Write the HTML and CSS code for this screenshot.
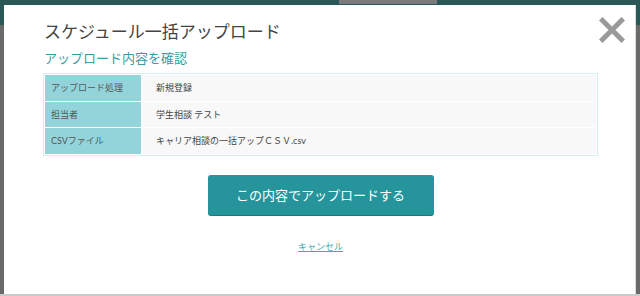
FILE: index.html
```html
<!DOCTYPE html>
<html lang="ja">
<head>
  <meta charset="UTF-8">
  <meta name="viewport" content="width=device-width">
  <title>スケジュール一括アップロード</title>
  <link rel="stylesheet" href="styles.css">
</head>
<body>

<div class=topbar><span class=tab></span></div>

<div class=modal>
  <button class=close title="閉じる">
    <svg width=26 height=26 viewBox="0 0 26 26">
      <path d="M3.5 3.5 L22.5 22.5 M22.5 3.5 L3.5 22.5" stroke="#9a9a9a" stroke-width="5" stroke-linecap="square" fill="none"/>
    </svg>
  </button>

  <h2 class=title>スケジュール一括アップロード</h2>
  <h3 class=subtitle>アップロード内容を確認</h3>

  <table class=confirm>
    <tr><th>アップロード処理</th><td>新規登録</td></tr>
    <tr><th>担当者</th><td>学生相談 テスト</td></tr>
    <tr><th>CSVファイル</th><td>キャリア相談の一括アップＣＳＶ.csv</td></tr>
  </table>

  <div class=actions>
    <button class=submit>この内容でアップロードする</button>
    <a class=cancel href="#">キャンセル</a>
  </div>
</div>

<div class=bottombar></div>

</body>
</html>
```

FILE: styles.css
```css
body {
  margin: 0;
  height: 296px;
  overflow: hidden;
  background: linear-gradient(#2a5859 25px, #6a6a6a 25px);
  font-family: Lato, "Noto Sans CJK JP", sans-serif;
}
.topbar {
  height: 5px;
  display: flex;
}
.tab {
  margin-left: 339px;
  width: 98px;
  height: 4px;
  background: #7b7b7b;
}
.modal {
  position: relative;
  height: 289px;
  margin: 0 4px;
  padding: 15px 37px 0 39px;
  box-sizing: border-box;
  background: #fff;
  border-right: 1px solid #ddd;
}
.bottombar {
  height: 2px;
  background: #cbcbcb;
}
.close {
  position: absolute;
  top: 12px;
  right: 10px;
  padding: 0;
  border: 0;
  background: none;
  cursor: pointer;
  line-height: 0;
}
.title {
  margin: 0 0 5px 1px;
  font-size: 17px;
  line-height: 24px;
  font-weight: normal;
  color: #444;
}
.subtitle {
  margin: 0 0 6px 1px;
  font-size: 13px;
  line-height: 18px;
  font-weight: normal;
  color: #3a9ca3;
}
.confirm {
  width: 100%;
  border: 1px solid #d5eef2;
  border-spacing: 1px;
  font-size: 9px;
}
.confirm th, .confirm td {
  height: 25.5px;
  padding: 0 0 0 6px;
  text-align: left;
  font-weight: normal;
}
.confirm th {
  width: 90px;
  background: #93d4db;
  color: #555;
}
.confirm td {
  padding-left: 14px;
  background: #f8f8f8;
  color: #444;
}
.actions {
  display: flex;
  flex-direction: column;
  align-items: center;
}
.submit {
  margin-top: 19px;
  width: 226px;
  height: 40px;
  border: 0;
  border-radius: 3px;
  background: #25959b;
  box-shadow: 0 1px 0 #1b7a7f;
  color: #fff;
  font: 13px Lato, "Noto Sans CJK JP", sans-serif;
  cursor: pointer;
}
.cancel {
  margin-top: 26px;
  font-size: 9px;
  line-height: 12px;
  color: #4aa8ae;
}
```
